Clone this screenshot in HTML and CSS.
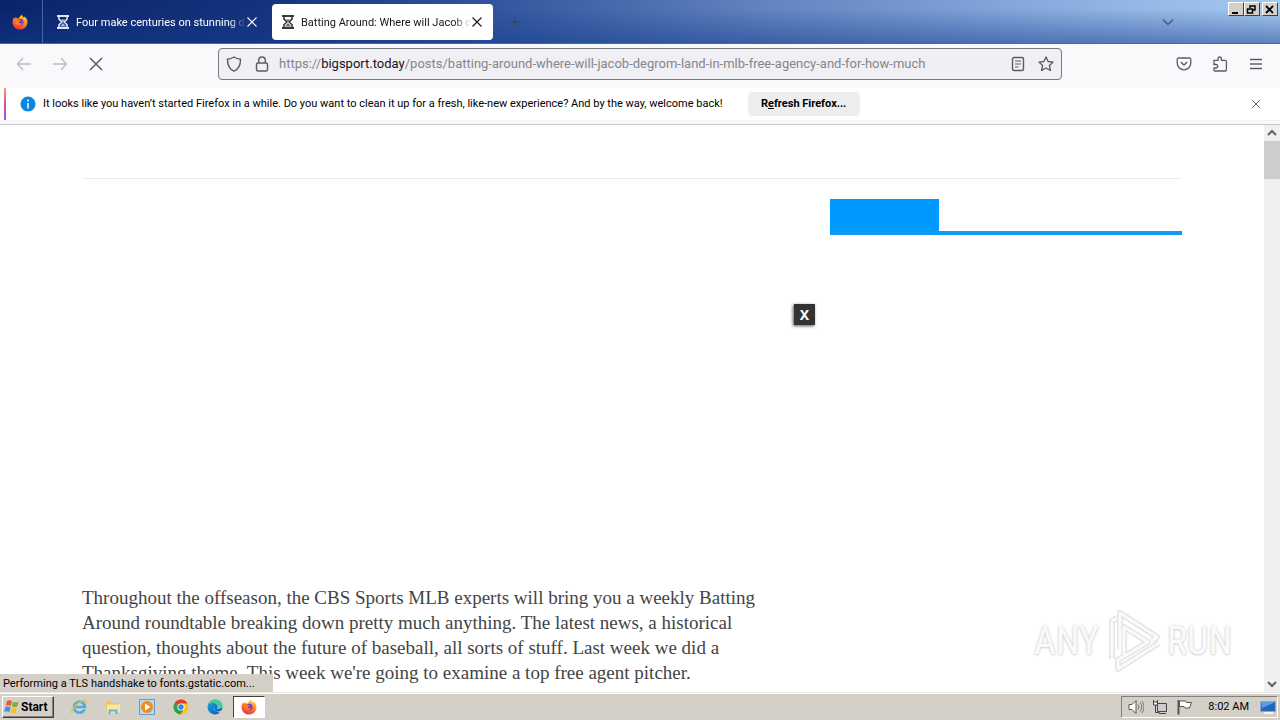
FILE: index.html
```html
<!DOCTYPE html>
<html lang="en">
<head>
<meta charset="utf-8">
<title>Batting Around: Where will Jacob deGrom land</title>
<link rel="stylesheet" href="styles.css">
</head>
<body>
<svg class="defs" aria-hidden="true">
  <defs>
    <linearGradient id="flame" x1="0.8" y1="0" x2="0.3" y2="1"><stop offset="0" stop-color="#ffe14a"/><stop offset=".45" stop-color="#ff8a1f"/><stop offset="1" stop-color="#f5274f"/></linearGradient>
    <linearGradient id="edgeg" x1="0" y1="0" x2="1" y2="1"><stop offset="0" stop-color="#1ba4de"/><stop offset=".6" stop-color="#1277c8"/><stop offset="1" stop-color="#0d4f9e"/></linearGradient>
    <symbol id="firefox" viewBox="0 0 16 16">
      <path d="M8 15.6C3.8 15.6.5 12.4.5 8.3c0-2 .6-3.7 1.7-5l.3 1.4L4 3l.6 1.2 1.7.2C7.400 3 8.500 2 10 .4c.1 1.500.9 2.300 2 3.100l.6-.9c2 1.600 2.900 3.600 2.900 5.700 0 4.100-3.300 7.300-7.500 7.300z" fill="url(#flame)"/>
      <circle cx="8.200" cy="8.200" r="3.400" fill="#8139c8"/>
      <path d="M2.500 5.500c2-.9 3.500-.4 4.300.5l2 .3c-.3 1-1.600 1.200-2 1.900.3 1.500 2.300 1.600 3.700.7-.4 2.500-4.500 3.600-6.700 1.200C2.600 8.800 2.300 7 2.500 5.500z" fill="#ff7a22"/>
    </symbol>
    <symbol id="hourglass" viewBox="0 0 14 14">
      <path d="M1 1h12M1 13h12" stroke="currentColor" stroke-width="2"/>
      <path d="M3 2v2.200L5.800 7 3 9.800V12M11 2v2.200L8.200 7 11 9.800V12" fill="none" stroke="currentColor" stroke-width="1.600"/>
      <path d="M4.500 4.500h5L7 7zM7 8l3 3.500H4z" fill="currentColor" opacity=".75"/>
    </symbol>
    <symbol id="cross" viewBox="0 0 16 16"><path d="M2 2l12 12M14 2L2 14" fill="none" stroke="currentColor" stroke-width="1.500"/></symbol>
    <symbol id="up" viewBox="0 0 16 16"><path d="M4 10l4-4 4 4" fill="none" stroke="currentColor" stroke-width="2"/></symbol>
  </defs>
</svg>

<header class="tabstrip">
  <div class="fx"><svg class="i16"><use href="#firefox"/></svg></div>
  <div class="tab">
    <svg class="i14"><use href="#hourglass"/></svg>
    <span class="tab-label">Four make centuries on stunning d</span>
    <button class="plain" aria-label="Close tab"><svg class="i12"><use href="#cross"/></svg></button>
  </div>
  <div class="tab active">
    <svg class="i14"><use href="#hourglass"/></svg>
    <span class="tab-label">Batting Around: Where will Jacob d</span>
    <button class="plain" aria-label="Close tab"><svg class="i12"><use href="#cross"/></svg></button>
  </div>
  <button class="plain newtab" aria-label="New tab"><svg class="i10" viewBox="0 0 10 10"><path d="M5 0v10M0 5h10" stroke="currentColor"/></svg></button>
  <button class="plain alltabs" aria-label="List all tabs"><svg width="12" height="8" viewBox="0 0 12 8"><path d="M1 1.500l5 5 5-5" fill="none" stroke="currentColor" stroke-width="1.500"/></svg></button>
  <div class="winbtns">
    <button aria-label="Minimize"><svg width="11" height="9" viewBox="0 0 11 9"><path d="M2 8h6" stroke="#000" stroke-width="2"/></svg></button>
    <button aria-label="Restore"><svg width="11" height="9" viewBox="0 0 11 9"><path d="M4 3V1h5v4H7M4 1h5" fill="none" stroke="#000" stroke-width="1.500"/><path d="M1.500 4h5v4h-5z" fill="none" stroke="#000" stroke-width="1.500"/></svg></button>
    <button class="wclose" aria-label="Close"><svg width="11" height="9" viewBox="0 0 11 9"><path d="M2 1l7 7M9 1L2 8" stroke="#000" stroke-width="1.800"/></svg></button>
  </div>
</header>

<nav class="toolbar">
  <div class="navbtns">
    <button class="plain dim" aria-label="Back"><svg class="i16" viewBox="0 0 16 16"><path d="M15 8H1.500M7 2L1.500 8 7 14" fill="none" stroke="currentColor" stroke-width="1.300"/></svg></button>
    <button class="plain dim" aria-label="Forward"><svg class="i16" viewBox="0 0 16 16"><path d="M1 8h13.500M9 2l5.500 6L9 14" fill="none" stroke="currentColor" stroke-width="1.300"/></svg></button>
    <button class="plain" aria-label="Stop"><svg class="i16"><use href="#cross"/></svg></button>
  </div>
  <div class="urlbar">
    <svg class="i16" viewBox="0 0 16 16"><path d="M8 1c2 1.400 4 2 6.500 2.200C14.600 8.500 13 13 8 15.200 3 13 1.400 8.500 1.500 3.200 4 3 6 2.400 8 1z" fill="none" stroke="currentColor" stroke-width="1.400"/></svg>
    <svg class="i16" viewBox="0 0 16 16"><rect x="2.500" y="7" width="11" height="8" rx="1.500" fill="none" stroke="currentColor" stroke-width="1.400"/><path d="M4.700 7V4.300a3.300 3.300 0 0 1 6.600 0V7" fill="none" stroke="currentColor" stroke-width="1.400"/></svg>
    <div class="url" role="textbox" aria-label="Address">https://<b>bigsport.today</b>/posts/batting-around-where-will-jacob-degrom-land-in-mlb-free-agency-and-for-how-much</div>
    <button class="plain" aria-label="Reader view"><svg class="i16" viewBox="0 0 16 16"><rect x="2.500" y="1.500" width="11" height="13" rx="1.500" fill="none" stroke="currentColor" stroke-width="1.400"/><path d="M5 5h6M5 8h6M5 11h3.500" stroke="currentColor" stroke-width="1.200"/></svg></button>
    <button class="plain" aria-label="Bookmark"><svg class="i16" viewBox="0 0 16 16"><path d="M8 .9l2.100 4.600 5 .6-3.700 3.400 1 5L8 12l-4.400 2.500 1-5L.9 6.100l5-.6z" fill="none" stroke="currentColor" stroke-width="1.300" stroke-linejoin="round"/></svg></button>
  </div>
  <div class="tools">
    <button class="plain" aria-label="Pocket"><svg class="i16" viewBox="0 0 16 16"><path d="M2.500 2h11a1.300 1.300 0 0 1 1.300 1.300V7a6.800 6.800 0 0 1-13.600 0V3.300A1.300 1.300 0 0 1 2.500 2z" fill="none" stroke="currentColor" stroke-width="1.300"/><path d="M4.800 6L8 9l3.200-3" fill="none" stroke="currentColor" stroke-width="1.400"/></svg></button>
    <button class="plain" aria-label="Extensions"><svg class="i16" viewBox="0 0 16 16"><path d="M2 5.500V4.300h4V2.700a1.700 1.700 0 0 1 3.400 0v1.600h4a1 1 0 0 1 1 1V14a1 1 0 0 1-1 1H3a1 1 0 0 1-1-1v-2h2a1.700 1.700 0 0 0 0-3.500H2z" fill="none" stroke="currentColor" stroke-width="1.300"/></svg></button>
    <button class="plain" aria-label="Menu"><svg class="i16" viewBox="0 0 16 16"><path d="M2 3.500h12M2 8h12M2 12.500h12" stroke="currentColor" stroke-width="1.300"/></svg></button>
  </div>
</nav>

<section class="notice">
  <span class="accent"></span>
  <svg class="i16" viewBox="0 0 16 16"><circle cx="8" cy="8" r="7.500" fill="#0a84e0"/><path d="M8 3.500v2M8 7v5.500" stroke="#fff" stroke-width="1.500"/></svg>
  <p>It looks like you haven’t started Firefox in a while. Do you want to clean it up for a fresh, like-new experience? And by the way, welcome back!</p>
  <button class="refresh">R<u>e</u>fresh Firefox...</button>
  <button class="plain nclose" aria-label="Dismiss"><svg class="i10"><use href="#cross"/></svg></button>
</section>

<div class="viewport">
  <main class="page">
    <div class="container">
      <div class="rule"></div>
      <div class="columns">
        <article>
          <button class="adclose" aria-label="Close ad">X</button>
          <p>Throughout the offseason, the CBS Sports MLB experts will bring you a weekly Batting<br>Around roundtable breaking down pretty much anything. The latest news, a historical<br>question, thoughts about the future of baseball, all sorts of stuff. Last week we did a<br>Thanksgiving theme. This week we're going to examine a top free agent pitcher.</p>
        </article>
        <aside><div class="sidehead"></div></aside>
      </div>
    </div>
  </main>
  <div class="scrollbar">
    <svg class="i16"><use href="#up"/></svg>
    <div class="thumb"></div>
    <svg class="i16 flip"><use href="#up"/></svg>
  </div>
  <div class="status">Performing a TLS handshake to fonts.gstatic.com...</div>
  <div class="watermark">
    <span>ANY</span>
    <svg width="60" height="64" viewBox="0 0 60 64"><g fill="none" stroke-linejoin="round"><path d="M9 50V12l5-3M17 40V4l37 24-5 4M21 46V18l24 15-30 18v9l41-26" stroke="#e4e4e4" stroke-width="6"/><path d="M9 50V12l5-3M17 40V4l37 24-5 4M21 46V18l24 15-30 18v9l41-26" stroke="#fafafa" stroke-width="3"/></g></svg>
    <span>RUN</span>
  </div>
</div>

<footer class="taskbar">
  <button class="start"><svg class="i16" viewBox="0 0 16 16"><path d="M3 2c2-1 3.500-.8 5 .2L6.800 7c-1.500-.9-3-1-5-.2z" fill="#e8582c"/><path d="M9 2.800c1.800.8 3.600.7 5.500 0L13.200 7.700c-2 .7-3.700.6-5.300-.2z" fill="#7ab23c"/><path d="M1.500 8c2-.8 3.500-.7 5 .2L5.200 13c-1.500-.9-3-1-5-.2z" fill="#3f8ed8"/><path d="M7.600 8.800c1.700.8 3.400.7 5.300 0l-1.300 4.900c-2 .7-3.700.6-5.300-.2z" fill="#f5c02c"/></svg>Start</button>
  <div class="apps">
    <button class="app" aria-label="Internet Explorer"><svg class="i16" viewBox="0 0 16 16"><path d="M13.500 10.500A5.500 5.500 0 1 1 14 8H4" fill="none" stroke="#43aee8" stroke-width="2.600"/><path d="M1 14.500C-1 11 9 .5 14.500 1.500c1 .5.500 2-.5 3" fill="none" stroke="#e8bd3d" stroke-width="1.300"/></svg></button>
    <button class="app" aria-label="Explorer"><svg class="i16" viewBox="0 0 16 16"><path d="M1 2.500h5l1.500 1.500H14v9H1z" fill="#ecc85c"/><path d="M2 5.500h13v8H2z" fill="#f8e7a0"/><path d="M3.500 15v-4.500h9V15h-2v-2.500h-5V15z" fill="#66b4dc"/></svg></button>
    <button class="app" aria-label="Media Player"><svg class="i16" viewBox="0 0 16 16"><path d="M.5.500h15v15H.5z" fill="#b8d9f2" stroke="#5d9cce"/><circle cx="8" cy="8" r="6" fill="#f28a1c"/><path d="M6 4.500L11.500 8 6 11.500z" fill="#fff"/></svg></button>
    <button class="app" aria-label="Chrome"><svg class="i16" viewBox="0 0 16 16"><circle cx="8" cy="8" r="7.500" fill="#f7c51e"/><path d="M8 8L1.500 4.200A7.500 7.500 0 0 1 14.500 4.500H8z" fill="#e33b2e"/><path d="M8 8L1.500 4.200A7.500 7.500 0 0 0 7.400 15.500L11 10z" fill="#2fa04e"/><circle cx="8" cy="8" r="3.600" fill="#fff"/><circle cx="8" cy="8" r="2.700" fill="#3f7fe8"/></svg></button>
    <button class="app" aria-label="Edge"><svg class="i16" viewBox="0 0 16 16"><circle cx="8" cy="8" r="7.500" fill="url(#edgeg)"/><path d="M.8 6C2 2.500 5 .5 8.300.5c4.500 0 7.200 3.200 7.200 6 0 2.300-1.600 3.500-3.700 3.500-1.700 0-2.300-.6-1.800-1.300C11 6.500 9 4 6 4 3.800 4 1.800 5 .8 6z" fill="#45cba1"/><path d="M7 7.500c-1.500 3 1 5.500 4.500 5 1.500-.2 2.500-.8 3.300-1.500l.7 1.300-1.800 1.700C9 13 6 11 7 7.500z" fill="#d6cfc7"/></svg></button>
    <button class="app current" aria-label="Firefox"><svg class="i16"><use href="#firefox"/></svg></button>
  </div>
  <div class="tray">
    <svg class="i16" viewBox="0 0 16 16"><path d="M1 5.500h3L8 1.500v13l-4-4H1z" fill="#fff" stroke="#555"/><path d="M10 5.500q2 2.500 0 5M12 3.500q3.500 4.500 0 9M14 2q4 6 0 12" fill="none" stroke="#777"/></svg>
    <svg class="i16" viewBox="0 0 16 16"><path d="M5.500 4.500h9v8h-9z" fill="#ccc" stroke="#444"/><path d="M7 14.500h7M1.500 1v4.500h4V1M3.500 6v7.500h4" fill="none" stroke="#444"/><path d="M1.500 3h4v3h-4z" fill="#fff" stroke="#444"/></svg>
    <svg class="i16" viewBox="0 0 16 16"><path d="M2.500 1v14.500" stroke="#555" stroke-width="2"/><path d="M3.500 2h6l1 1.500h5l-2 5.500H9L8 7.500H3.500z" fill="#fff" stroke="#555"/></svg>
    <time>8:02 AM</time>
    <svg class="i16" viewBox="0 0 16 16"><path d="M.5 2.500h15v10H.5z" fill="#2467c0" stroke="#8aabd4"/><path d="M1 3h14L2 9z" fill="#5c9ce4"/><path d="M4 14h9" stroke="#f4f4f4" stroke-width="2"/></svg>
  </div>
</footer>
</body>
</html>
```

FILE: styles.css
```css
* { box-sizing: border-box; }
body {
  margin: 0;
  height: 100vh;
  display: flex;
  flex-direction: column;
  overflow: hidden;
  background: #fff;
  color: #000;
  font: 11px/16px Roboto, sans-serif;
}
p { margin: 0; }
svg { display: block; flex: none; }
button { font: inherit; color: inherit; }
.defs { position: absolute; width: 0; height: 0; }
.i16 { width: 16px; height: 16px; }
.i14 { width: 14px; height: 14px; }
.i12 { width: 12px; height: 12px; }
.i10 { width: 10px; height: 10px; }
.plain { background: none; border: 0; padding: 0; display: flex; }

.tabstrip {
  flex: none;
  display: flex;
  align-items: center;
  height: 44px;
  background:
    linear-gradient(to bottom, transparent 20%, rgba(20, 60, 140, .5)),
    linear-gradient(to right, #0a246a, #14327c 20%, #3558a0 40%, #6284c0 60%, #86a8dc 80%, #a6caf0);
  border-bottom: 1px solid #54658c;
}
.fx {
  width: 43px;
  height: 100%;
  display: grid;
  place-items: center;
  padding-right: 3px;
  border-right: 1px solid #4a64a4;
}
.tab {
  display: flex;
  align-items: center;
  gap: 6px;
  width: 221px;
  height: 36px;
  margin-left: 4px;
  padding: 0 10px 0 9px;
  color: #fff;
  border-radius: 4px;
}
.tab .i14 { color: #dce4f8; }
.tab.active { background: #fff; color: #15141a; }
.tab.active .i14 { color: #38383d; }
.tab-label {
  flex: 1;
  overflow: hidden;
  white-space: nowrap;
  padding-top: 2px;
  margin-right: -6px;
  mask-image: linear-gradient(to right, #000 90%, transparent);
}
.newtab { margin-left: 17px; color: #3c4448; }
.alltabs { margin-left: auto; color: #3f5a8c; }
.winbtns { display: flex; align-self: flex-start; margin: 2px 2px 0 54px; }
.winbtns button {
  width: 16px;
  height: 14px;
  padding: 1px;
  background: #d4d0c8;
  border: 1px solid;
  border-color: #fff #404040 #404040 #fff;
}
.winbtns .wclose { margin-left: 2px; }

.toolbar {
  flex: none;
  display: flex;
  align-items: center;
  height: 44px;
  padding: 0 16px 4px;
  background: #f9f9fb;
  color: #5b5b66;
}
.navbtns, .tools { flex: none; display: flex; gap: 20px; width: 202px; }
.tools { justify-content: flex-end; }
.dim { color: #bcbcc2; }
.urlbar {
  flex: 1;
  min-width: 0;
  display: flex;
  align-items: center;
  gap: 12px;
  height: 32px;
  padding: 0 7px;
  background: #f0f0f4;
  border: 1px solid #77777e;
  border-radius: 4px;
}
.url {
  flex: 1;
  overflow: hidden;
  white-space: nowrap;
  margin-left: -3px;
  font-size: 13px;
  line-height: 20px;
  color: #85858c;
}
.url b { font-weight: 400; color: #15141a; }

.notice {
  flex: none;
  display: flex;
  align-items: center;
  height: 37px;
  padding: 0 19px 4px 4px;
  border-bottom: 1px solid #c8c8cc;
  background: linear-gradient(#fff 32px, #ececee 32px, #f9f9fb 33px);
}
.accent {
  width: 2px;
  height: 32px;
  margin-right: 14px;
  background: linear-gradient(#ff9a62, #d44fa0 50%, #9059ff);
}
.notice p { margin-left: 7px; white-space: nowrap; }
.refresh {
  width: 112px;
  height: 24px;
  margin-left: 25px;
  padding: 0;
  border: 0;
  border-radius: 4px;
  background: #ededee;
  font-weight: 700;
  white-space: nowrap;
}
.nclose { margin-left: auto; color: #5b5b66; }

.viewport { flex: 1; min-height: 0; position: relative; display: flex; }
.page { flex: 1; overflow: hidden; }
.container { max-width: 1100px; margin: 0 auto; padding-top: 53px; }
.rule { border-top: 1px solid #ebebeb; }
.columns {
  display: grid;
  grid-template-columns: 1fr 352px;
  gap: 15px;
  padding-top: 20px;
}
article {
  display: flex;
  flex-direction: column;
  gap: 260px;
  padding-top: 105px;
  color: #444;
  font: 19px/25px "Liberation Serif", serif;
}
article p { white-space: nowrap; }
.adclose {
  align-self: flex-end;
  width: 21px;
  height: 21px;
  padding: 0;
  border: 0;
  background: #333;
  color: #fff;
  box-shadow: -1px 1px 3px #555;
  font: 700 14px/20px "Noto Sans", sans-serif;
}
.sidehead { height: 36px; border-bottom: 4px solid #0f98f4; background: linear-gradient(#0099ff, #0099ff) no-repeat 0 0 / 109px 100%; }

.scrollbar {
  width: 16px;
  display: flex;
  flex-direction: column;
  background: #f0f0f0;
  color: #606060;
}
.thumb { height: 38px; background: #cdcdcd; }
.flip { margin-top: auto; transform: rotate(180deg); }
.status {
  position: absolute;
  left: 0;
  bottom: 0;
  width: 273px;
  height: 18px;
  padding: 2px 3px;
  background: #d4d0c8;
  white-space: nowrap;
}
.watermark {
  position: absolute;
  right: 48px;
  bottom: 19px;
  display: flex;
  align-items: center;
  gap: 4px;
  color: #fafafa;
  font: 38px/48px "Roboto Condensed", "Liberation Sans Narrow", sans-serif;
  text-shadow: 0 0 3px #ccc, 0 1px 2px #ddd;
}

.taskbar {
  flex: none;
  display: flex;
  align-items: center;
  height: 28px;
  padding: 2px;
  background: #d4d0c8;
  border-top: 1px solid #e8e6e0;
  box-shadow: inset 0 1px #fff;
}
.start {
  display: flex;
  align-items: center;
  gap: 1px;
  width: 52px;
  height: 22px;
  padding: 0 1px;
  background: #d4d0c8;
  border: 1px solid;
  border-color: #fff #404040 #404040 #fff;
  box-shadow: inset -1px -1px #808080;
  font-size: 12px;
  font-weight: 700;
}
.apps { display: flex; gap: 2px; margin-left: 9px; }
.app {
  display: grid;
  place-items: center;
  width: 32px;
  height: 22px;
  padding: 0;
  background: none;
  border: 1px solid transparent;
}
.app.current { background: #fff; border-color: #404040 #fff #fff #404040; }
.tray {
  display: flex;
  align-items: center;
  gap: 8px;
  height: 22px;
  margin-left: auto;
  padding: 0 1px 0 6px;
  border: 1px solid;
  border-color: #808080 #fff #fff #808080;
}
.tray time { margin: 0 3px 0 8px; white-space: nowrap; }
```
